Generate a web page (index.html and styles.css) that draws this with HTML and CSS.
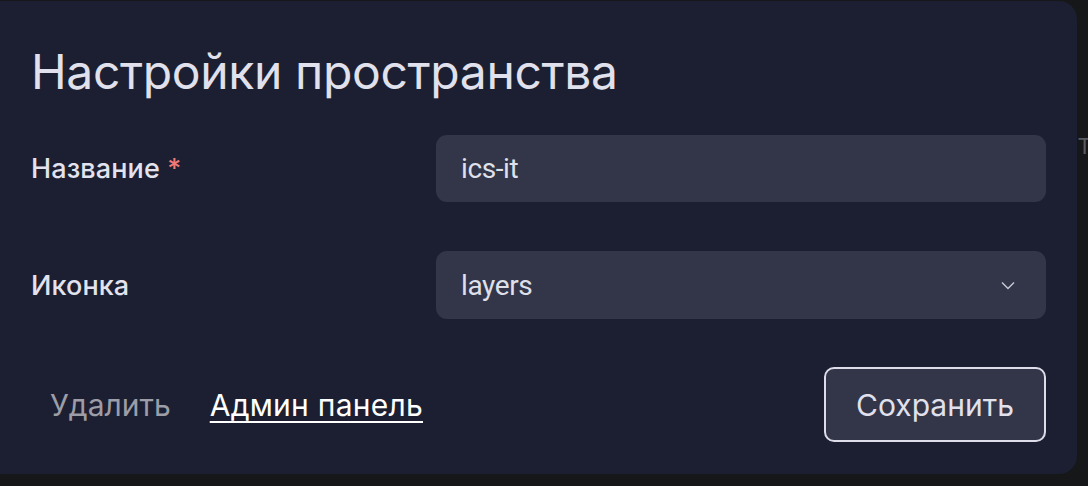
FILE: index.html
```html
<!DOCTYPE html>
<html lang="ru">
<head>
<meta charset="utf-8">
<link rel="stylesheet" href="styles.css">
<title>Настройки пространства</title>
</head>
<body>
<div class="stage">
  <section class="panel">
    <h1 class="title">Настройки пространства</h1>
    <div class="form">
      <label class="label">Название <span class="req">*</span></label>
      <div class="field"><span class="value">ics-it</span></div>
      <label class="label">Иконка</label>
      <div class="field select">
        <span class="value">layers</span>
        <svg class="chev" width="14" height="9" viewBox="0 0 14 9"><path d="M1 1.5 L7 7.5 L13 1.5" fill="none" stroke="#c9cad6" stroke-width="1.4"/></svg>
      </div>
    </div>
    <div class="footer">
      <div class="links">
        <a class="del">Удалить</a>
        <a class="admin">Админ панель</a>
      </div>
      <button class="save">Сохранить</button>
    </div>
  </section>
  <div class="behind">T</div>
</div>
</body>
</html>
```
FILE: styles.css
```css
html, body {
  margin: 0;
  padding: 0;
  background: #161719;
  width: 1088px;
  height: 486px;
  overflow: hidden;
}
.stage {
  display: flex;
  align-items: flex-start;
  padding-top: 1px;
}
.panel {
  width: 1077px;
  height: 473px;
  box-sizing: border-box;
  background: #1c1f31;
  border-radius: 0 18px 18px 0;
  padding: 0 31px;
  font-family: Inter, "Noto Sans", sans-serif;
  color: #e2e3ee;
  flex-shrink: 0;
}
.title {
  margin: 0;
  padding-top: 42px;
  height: 92px;
  box-sizing: border-box;
  font-size: 48px;
  font-weight: 400;
  line-height: 58px;
  color: #e0e1ec;
  letter-spacing: -0.35px;
}
.form {
  margin-top: 42px;
  display: grid;
  grid-template-columns: 405px 610px;
  row-gap: 49px;
  align-items: center;
}
.label {
  font-size: 27px;
  font-weight: 500;
  color: #e2e3ee;
  letter-spacing: 0.1px;
}
.req { color: #ef7a7a; }
.field {
  height: 67px;
  border-radius: 11px;
  background: #333548;
  display: flex;
  align-items: center;
  padding: 0 31px 0 25px;
  box-sizing: border-box;
}
.select { justify-content: space-between; height: 68px; }
.value {
  font-family: Roboto, sans-serif;
  font-size: 28px;
  color: #dfe0ea;
  letter-spacing: -0.4px;
}
.footer {
  margin-top: 48px;
  display: flex;
  justify-content: space-between;
  align-items: center;
}
.links {
  display: flex;
  gap: 39px;
  padding-left: 19px;
  font-size: 30px;
}
.del { color: #9c9da7; }
.admin {
  color: #ffffff;
  letter-spacing: 0.25px;
  text-decoration: underline;
  text-underline-offset: 5px;
  text-decoration-thickness: 2px;
}
.save {
  width: 222px;
  height: 75px;
  border: 2px solid #dcdde8;
  border-radius: 10px;
  background: #333548;
  color: #e0e1ec;
  font-family: Inter, sans-serif;
  font-size: 30px;
  font-weight: 400;
  padding: 0;
}
.behind {
  margin-top: 133px;
  margin-left: 1px;
  font-family: Roboto, sans-serif;
  font-size: 22px;
  color: #5a5b60;
}
```
